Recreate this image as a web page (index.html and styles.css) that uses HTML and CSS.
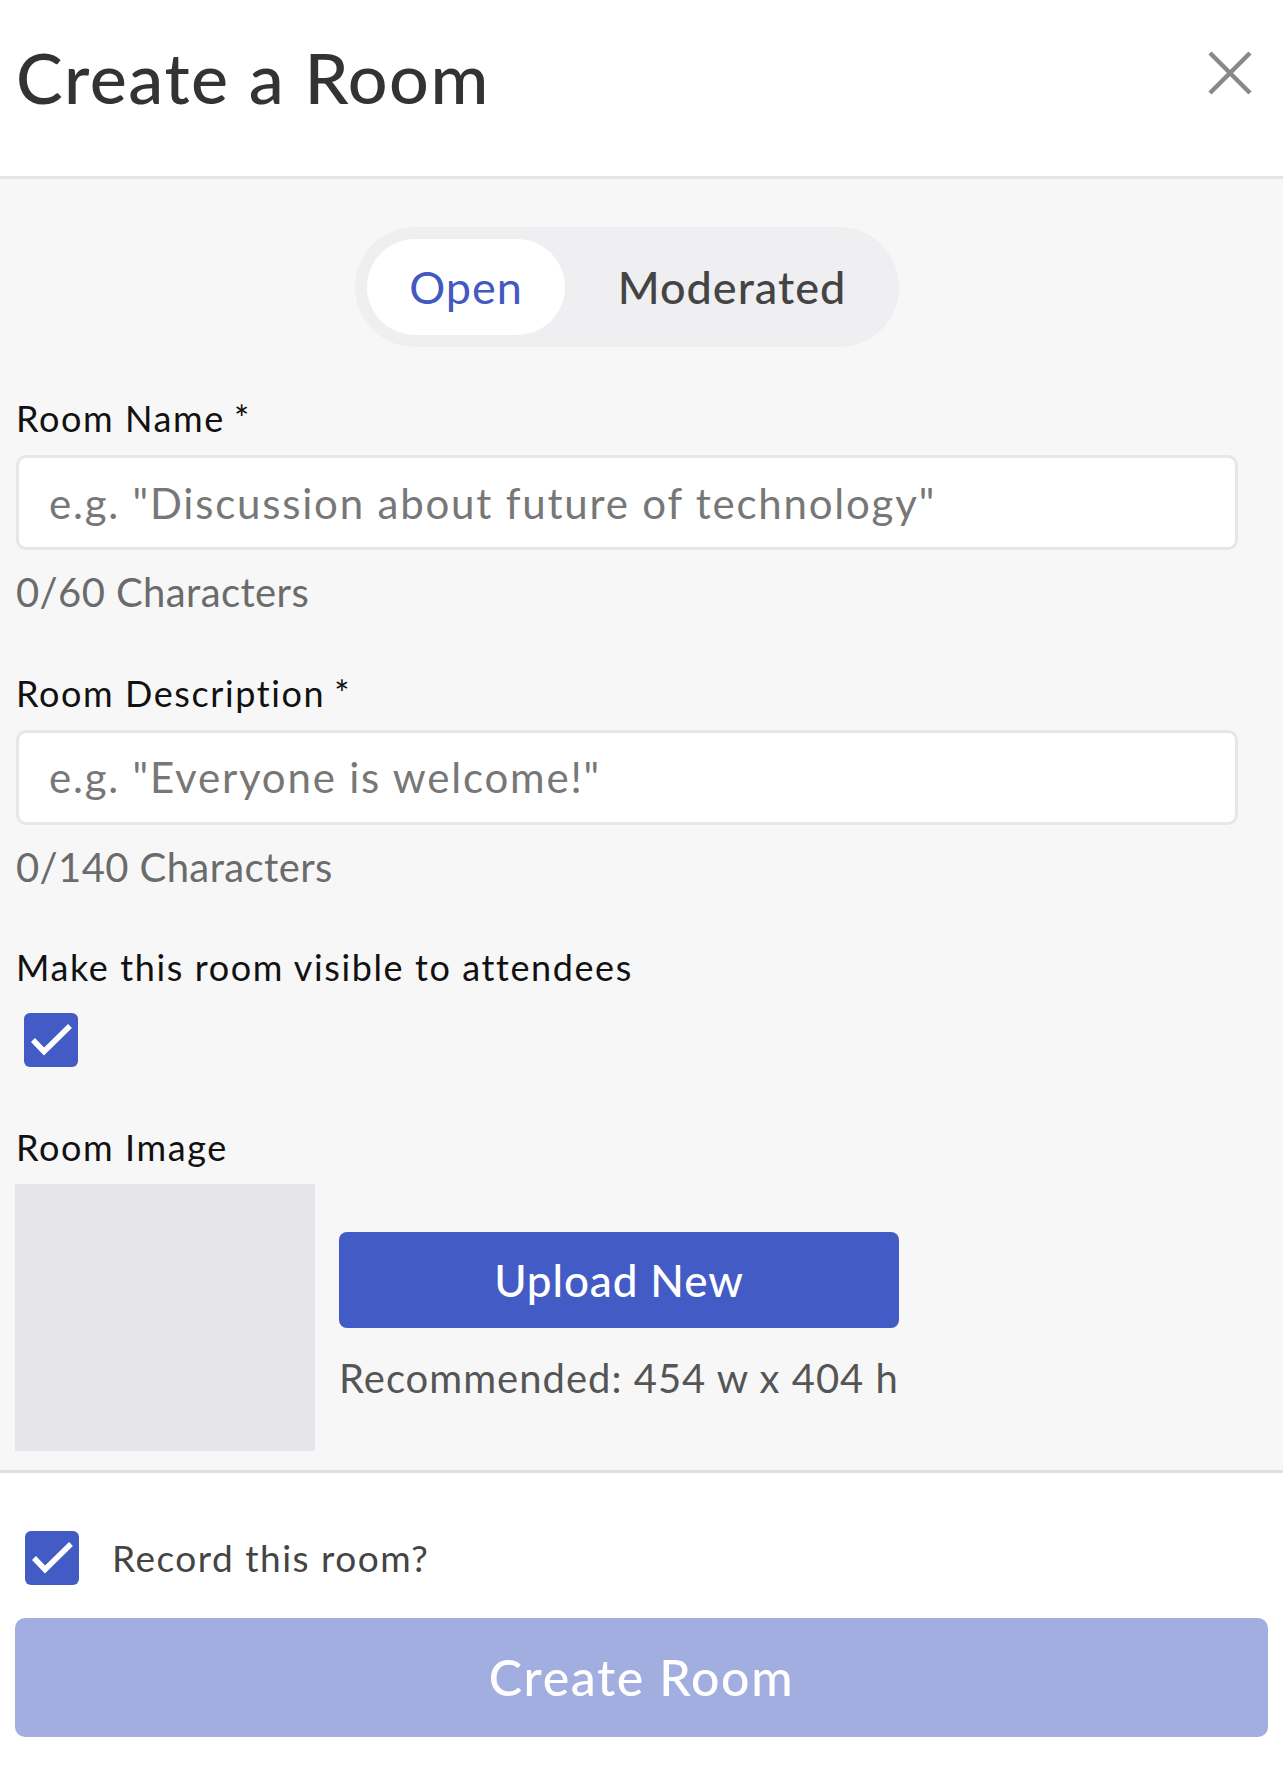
FILE: index.html
```html
<!DOCTYPE html>
<html lang="en">
<head>
<meta charset="utf-8">
<title>Create a Room</title>
<link rel="stylesheet" href="styles.css">
</head>
<body>
<div class="modal">
  <header class="modal-header">
    <h1 class="modal-title">Create a Room</h1>
    <button class="close-btn" type="button" aria-label="Close">
      <svg width="44" height="44" viewBox="0 0 44 44"><path d="M2 2 L42 42 M42 2 L2 42" stroke="#888" stroke-width="4.5" fill="none"/></svg>
    </button>
  </header>

  <main class="modal-body">
    <div class="toggle-wrap">
      <div class="toggle">
        <span class="tab tab-open tab-active">Open</span>
        <span class="tab tab-mod">Moderated</span>
      </div>
    </div>

    <div class="field field-name">
      <label class="label">Room Name<span class="req">*</span></label>
      <input class="text-input" type="text" placeholder="e.g. &quot;Discussion about future of technology&quot;">
      <div class="counter">0/60 Characters</div>
    </div>

    <div class="field field-desc">
      <label class="label">Room Description<span class="req">*</span></label>
      <input class="text-input" type="text" placeholder="e.g. &quot;Everyone is welcome!&quot;">
      <div class="counter">0/140 Characters</div>
    </div>

    <div class="field field-visible">
      <div class="label">Make this room visible to attendees</div>
      <span class="checkbox checkbox-visible">
        <svg width="54" height="54" viewBox="0 0 54 54"><rect x="0" y="0" width="54" height="54" rx="6" fill="#435bc4"/><polyline points="9,27 20,38.5 46,13" stroke="#fff" stroke-width="5.5" fill="none"/></svg>
      </span>
    </div>

    <div class="field field-image">
      <div class="label">Room Image</div>
      <div class="image-row">
        <div class="image-box"></div>
        <div class="image-actions">
          <button class="upload-btn" type="button">Upload New</button>
          <div class="recommend">Recommended: 454 w x 404 h</div>
        </div>
      </div>
    </div>
  </main>

  <footer class="modal-footer">
    <div class="record-row">
      <span class="checkbox">
        <svg width="54" height="54" viewBox="0 0 54 54"><rect x="0" y="0" width="54" height="54" rx="6" fill="#435bc4"/><polyline points="9,27 20,38.5 46,13" stroke="#fff" stroke-width="5.5" fill="none"/></svg>
      </span>
      <span class="record-text">Record this room?</span>
    </div>
    <button class="create-btn" type="button">Create Room</button>
  </footer>
</div>
</body>
</html>
```

FILE: styles.css
```css
* { box-sizing: border-box; }

html, body {
  margin: 0;
  padding: 0;
  background: #ffffff;
}

body {
  font-family: "Lato", "Noto Sans", sans-serif;
  color: #111;
}

.modal {
  width: 1283px;
  min-height: 1771px;
  display: flex;
  flex-direction: column;
}

/* Header */
.modal-header {
  display: flex;
  justify-content: space-between;
  align-items: flex-start;
  padding: 35px 31px 0 16px;
  height: 179px;
  border-bottom: 3px solid #e4e4e8;
  background: #fff;
}

.modal-title {
  margin: 0;
  font-size: 70px;
  line-height: 84px;
  font-weight: 500;
  color: #333;
  letter-spacing: 1.5px;
}

.close-btn {
  margin-top: 16px;
  padding: 0;
  border: none;
  background: none;
  width: 44px;
  height: 44px;
  display: block;
}
.close-btn svg { display: block; }

/* Body */
.modal-body {
  background: #f7f7f7;
  padding: 48px 45px 19px 16px;
  border-bottom: 3px solid #e0e0e4;
}

.toggle-wrap {
  display: flex;
  justify-content: center;
}

.toggle {
  display: flex;
  gap: 12px;
  padding: 12px;
  background: #efeff2;
  border-radius: 60px;
}

.tab {
  display: flex;
  align-items: center;
  justify-content: center;
  height: 96px;
  border-radius: 48px;
  font-size: 45px;
  font-weight: 500;
  color: #444;
  letter-spacing: 1px;
}

.tab-open { width: 198px; }
.tab-mod { width: 310px; }

.tab-active {
  background: #fff;
  color: #4159c1;
  font-weight: 400;
}

.field { display: flex; flex-direction: column; }

.label {
  font-size: 36px;
  line-height: 42px;
  color: #111;
  letter-spacing: 1.6px;
}

.req {
  letter-spacing: 0;
  margin-left: 9px;
}

.field-name { margin-top: 50px; }
.field-desc { margin-top: 55.5px; }
.field-visible { margin-top: 55px; }
.field-image { margin-top: 59px; }

.text-input {
  margin-top: 16px;
  width: 1222px;
  height: 95px;
  border: 3px solid #e6e6eb;
  border-radius: 10px;
  background: #fff;
  padding: 0 30px;
  font-family: "Lato", "Noto Sans", sans-serif;
  font-size: 42px;
  letter-spacing: 1.8px;
  color: #333;
  outline: none;
}
.text-input::placeholder { color: #777; }

.counter {
  margin-top: 18px;
  font-size: 40px;
  line-height: 48px;
  color: #6b6b6b;
  letter-spacing: 0.4px;
}

.checkbox {
  display: block;
  width: 54px;
  height: 54px;
}
.checkbox svg { display: block; }

.checkbox-visible {
  margin-top: 25px;
  margin-left: 8px;
}

.image-row {
  margin-top: 16px;
  display: flex;
  align-items: center;
  gap: 24px;
}

.image-box {
  width: 300px;
  height: 267px;
  background: #e6e6ea;
  margin-left: -1px;
}

.image-actions {
  display: flex;
  flex-direction: column;
  padding-bottom: 1px;
}

.upload-btn {
  width: 560px;
  height: 96px;
  border: none;
  border-radius: 8px;
  background: #435bc4;
  color: #fff;
  font-family: "Lato", "Noto Sans", sans-serif;
  font-size: 44px;
  font-weight: 500;
  letter-spacing: 0.9px;
}

.recommend {
  margin-top: 26px;
  font-size: 40px;
  line-height: 48px;
  color: #555;
  letter-spacing: 1px;
}

/* Footer */
.modal-footer {
  background: #fff;
  padding: 58px 15px 34px 15px;
  display: flex;
  flex-direction: column;
}

.record-row {
  display: flex;
  align-items: center;
  gap: 33px;
  padding-left: 10px;
}

.record-text {
  font-size: 37px;
  line-height: 44px;
  color: #444;
  letter-spacing: 1.5px;
}

.create-btn {
  margin-top: 33px;
  width: 1253px;
  height: 119px;
  border: none;
  border-radius: 10px;
  background: #a2aee0;
  color: #fff;
  font-family: "Lato", "Noto Sans", sans-serif;
  font-size: 50px;
  font-weight: 500;
  letter-spacing: 1.7px;
}
```
